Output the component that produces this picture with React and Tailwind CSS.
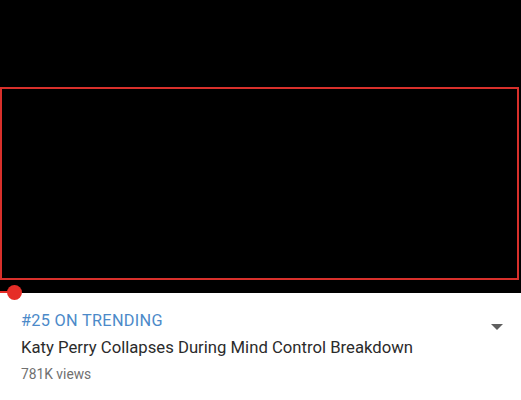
import { useState } from "react";

export default function App() {
  const [open, setOpen] = useState(false);

  return (
    <div className="w-[521px] h-[400px] bg-white overflow-hidden font-['Roboto',sans-serif]">
      {/* Player */}
      <div className="relative h-[293px] bg-black pt-[87px]">
        <div className="h-[193px] w-[519px] border-2 border-[#d8302b]" />
        {/* progress */}
        <div className="absolute left-0 bottom-0 h-[2px] w-[14px] bg-[#e52d27]" />
        <div className="absolute left-[7px] bottom-[-7px] w-[15px] h-[15px] rounded-full bg-[#e52d27]" />
      </div>

      {/* Info */}
      <div className="flex items-start pl-[21px] pr-[18px] pt-[18px]">
        <div className="flex-1 flex flex-col">
          <span className="text-[16.3px] leading-[20px] text-[#4c8ac9] tracking-[0.3px]">
            #25 ON TRENDING
          </span>
          <span className="mt-[6px] text-[16.7px] leading-[22px] text-[#2b2b2b]">
            Katy Perry Collapses During Mind Control Breakdown
          </span>
          <span className="mt-[6px] text-[13.8px] leading-[19px] text-[#707070]">
            781K views
          </span>
        </div>
        <button
          onClick={() => setOpen(!open)}
          className="mt-[12px] w-[12px] h-[8px] flex items-center justify-center"
        >
          <svg width="12" height="6" viewBox="0 0 12 6">
            <path d="M0 0 L12 0 L6 6 Z" fill="#5f5f5f" />
          </svg>
        </button>
      </div>
    </div>
  );
}
